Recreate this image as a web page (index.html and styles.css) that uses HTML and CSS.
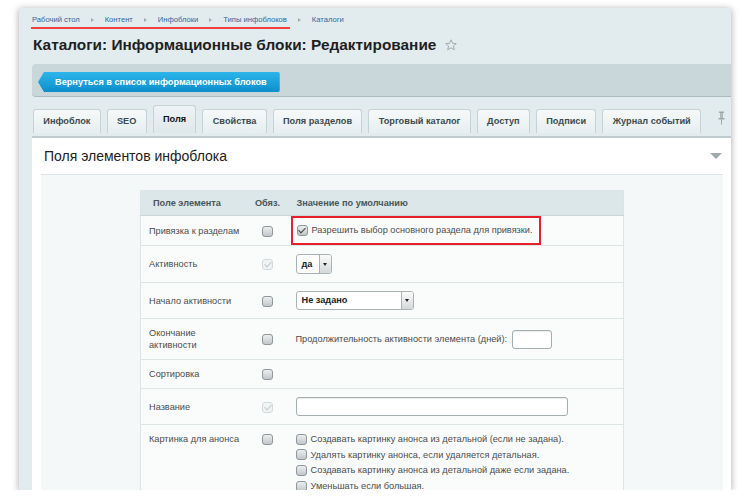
FILE: index.html
```html
<!DOCTYPE html>
<html lang="ru">
<head>
    <meta charset="UTF-8">
    <title>Каталоги: Информационные блоки: Редактирование</title>
    <link rel="stylesheet" href="styles.css">
</head>
<body>

<div class="panel">
    <!--хлебные крошки-->
    <div class="crumbs">
        <span class="crumbs-mark">
            <a href="#">Рабочий стол</a><i class="sep"></i>
            <a href="#">Контент</a><i class="sep"></i>
            <a href="#">Инфоблоки</a><i class="sep"></i>
            <a href="#">Типы инфоблоков</a>
        </span>
        <i class="sep sep-out"></i>
        <a href="#">Каталоги</a>
    </div>

    <!--заголовок-->
    <h1 class="title">
        Каталоги: Информационные блоки: Редактирование
        <svg class="star" width="12" height="12" viewBox="0 0 12 12">
            <polygon points="6,0.8 7.5,4.3 11.3,4.6 8.4,7.1 9.3,10.8 6,8.8 2.7,10.8 3.6,7.1 0.7,4.6 4.5,4.3" fill="none" stroke="#a3acaf" stroke-width="1"/>
        </svg>
    </h1>

    <!--панель с кнопкой-->
    <div class="toolbar">
        <a href="#" class="btn-back">Вернуться в список информационных блоков</a>
    </div>

    <!--вкладки-->
    <ul class="tabs">
        <li class="tab">Инфоблок</li>
        <li class="tab">SEO</li>
        <li class="tab current">Поля</li>
        <li class="tab">Свойства</li>
        <li class="tab">Поля разделов</li>
        <li class="tab">Торговый каталог</li>
        <li class="tab">Доступ</li>
        <li class="tab">Подписи</li>
        <li class="tab">Журнал событий</li>
        <li class="pin">
            <svg width="7" height="14" viewBox="0 0 7 14">
                <rect x="1" y="0.5" width="5" height="1.5" fill="#9ea7aa"/>
                <rect x="2" y="2" width="3" height="5" fill="#b1b9bc"/>
                <rect x="0.5" y="7" width="6" height="1.5" fill="#9ea7aa"/>
                <rect x="3" y="8.5" width="1" height="5" fill="#9ea7aa"/>
            </svg>
        </li>
    </ul>

    <!--содержимое вкладки-->
    <div class="content">
        <div class="content-head">
            <h2>Поля элементов инфоблока</h2>
            <svg width="12" height="7" viewBox="0 0 12 7">
                <polygon points="0,0 12,0 6,6" fill="#9fa8ab"/>
            </svg>
        </div>

        <div class="fields-box">
            <table class="fields">
                <colgroup>
                    <col class="w-name">
                    <col class="w-req">
                    <col>
                </colgroup>
                <thead>
                    <tr>
                        <th class="th-name">Поле элемента</th>
                        <th class="th-req">Обяз.</th>
                        <th class="th-val">Значение по умолчанию</th>
                    </tr>
                </thead>
                <tbody>
                    <tr>
                        <td class="name">Привязка к разделам</td>
                        <td class="req"><span class="chk"></span></td>
                        <td class="val val-mark">
                            <span class="mark">
                                <span class="chk checked"></span>
                                Разрешить выбор основного раздела для привязки.
                            </span>
                        </td>
                    </tr>
                    <tr>
                        <td class="name">Активность</td>
                        <td class="req"><span class="chk checked disabled"></span></td>
                        <td class="val">
                            <span class="select select-yn"><span>да</span><i class="select-arrow"></i></span>
                        </td>
                    </tr>
                    <tr>
                        <td class="name">Начало активности</td>
                        <td class="req"><span class="chk"></span></td>
                        <td class="val">
                            <span class="select select-wide"><span>Не задано</span><i class="select-arrow"></i></span>
                        </td>
                    </tr>
                    <tr>
                        <td class="name">Окончание активности</td>
                        <td class="req"><span class="chk"></span></td>
                        <td class="val">
                            Продолжительность активности элемента (дней):
                            <span class="input input-days"></span>
                        </td>
                    </tr>
                    <tr>
                        <td class="name">Сортировка</td>
                        <td class="req"><span class="chk"></span></td>
                        <td class="val"></td>
                    </tr>
                    <tr>
                        <td class="name">Название</td>
                        <td class="req"><span class="chk checked disabled"></span></td>
                        <td class="val"><span class="input input-name"></span></td>
                    </tr>
                    <tr class="row-top">
                        <td class="name">Картинка для анонса</td>
                        <td class="req"><span class="chk"></span></td>
                        <td class="val">
                            <ul class="check-list">
                                <li><span class="chk"></span>Создавать картинку анонса из детальной (если не задана).</li>
                                <li><span class="chk"></span>Удалять картинку анонса, если удаляется детальная.</li>
                                <li><span class="chk"></span>Создавать картинку анонса из детальной даже если задана.</li>
                                <li><span class="chk"></span>Уменьшать если большая.</li>
                            </ul>
                        </td>
                    </tr>
                </tbody>
            </table>
        </div>
    </div>
</div>

</body>
</html>
```

FILE: styles.css
```css
* {
    margin: 0;
    padding: 0;
    list-style: none;
    box-sizing: border-box;
}

body {
    padding: 8px 19px 0;
    background-color: #fff;
    font-family: "Liberation Sans", Arial, sans-serif;
    color: #333;
}

.panel {
    height: 482px;
    overflow: hidden;
    background-color: #e2ecee;
    box-shadow: 0 1px 7px rgba(0, 0, 0, .35);
}

/*хлебные крошки*/
.crumbs {
    display: flex;
    align-items: flex-start;
    padding: 7px 0 0 13px;
    font-size: 7.6px;
    line-height: 10px;
    white-space: nowrap;
}

.crumbs a {
    color: #2f67a0;
    text-decoration: none;
}

.crumbs-mark {
    display: flex;
    align-items: center;
    margin-left: -1px;
    padding: 0 3px 2px 1px;
    border-bottom: 2px solid #f2403f;
}

.sep {
    width: 0;
    height: 0;
    margin: 0 11px;
    border-left: 3px solid #a4aeb1;
    border-top: 2.5px solid transparent;
    border-bottom: 2.5px solid transparent;
}

.sep-out {
    margin-top: 2.5px;
    margin-left: 8px;
}

/*заголовок*/
.title {
    display: flex;
    align-items: center;
    margin: 6px 0 0 14px;
    font-size: 15.4px;
    line-height: 20px;
    font-weight: bold;
    color: #1f1f1f;
}

.star {
    margin-left: 9px;
}

/*панель с кнопкой*/
.toolbar {
    height: 33px;
    margin: 9px 0 0 13px;
    padding: 7px 0 0 6px;
    background: repeating-conic-gradient(#c6d3d7 0 25%, #ccd9dd 0 50%) 0 0 / 2px 2px;
    border-bottom: 1px solid #abbabe;
    border-radius: 4px 0 0 4px;
}

.btn-back {
    display: inline-block;
    height: 20px;
    line-height: 20px;
    padding: 0 13px 0 17px;
    font-size: 9.2px;
    font-weight: bold;
    color: #fff;
    text-decoration: none;
    background: linear-gradient(#2db5ea, #0c8fcc);
    border-radius: 0 2px 2px 0;
    clip-path: polygon(6px 0, 100% 0, 100% 100%, 6px 100%, 0 50%);
}

/*вкладки*/
.tabs {
    display: flex;
    align-items: flex-end;
    height: 28px;
    margin: 8px 0 0 14px;
}

.tab {
    flex-shrink: 0;
    height: 24px;
    line-height: 23px;
    margin-right: 6px;
    padding: 0 9.3px;
    font-size: 9.2px;
    font-weight: bold;
    white-space: nowrap;
    color: #3d4a4e;
    background: linear-gradient(#f6f9f9, #e7eef0);
    border: 1px solid #c6d2d5;
    border-bottom: 0;
    border-radius: 3px 3px 0 0;
}

.tab.current {
    height: 28px;
    line-height: 27px;
    color: #111;
    background: linear-gradient(#eef3f4, #dfe8ea);
}

.pin {
    align-self: center;
    margin: 2px 6px 0 auto;
}

/*содержимое*/
.content {
    margin: 3px 0 0 13px;
    background-color: #fff;
    border-top: 2px solid #c0ccd0;
}

.content-head {
    display: flex;
    justify-content: space-between;
    align-items: center;
    padding: 8px 9px 8px 12px;
}

.content-head h2 {
    font-size: 14px;
    line-height: 20px;
    font-weight: normal;
    color: #222;
}

.fields-box {
    min-height: 330px;
    margin: 0 8px 0 9px;
    padding: 15px 0 0 99px;
    background-color: #f4f8f9;
    border-top: 1px solid #dbe4e6;
}

/*таблица полей*/
.fields {
    width: 484px;
    table-layout: fixed;
    border-collapse: collapse;
    background-color: #fafcfc;
    border-left: 1px solid #dce4e6;
    border-right: 1px solid #dce4e6;
    font-size: 9.2px;
    line-height: 12px;
    color: #4b4b4b;
}

.w-name {
    width: 106px;
}

.w-req {
    width: 42px;
}

.fields th {
    padding: 7px 0 6px;
    text-align: left;
    font-weight: bold;
    color: #4a5659;
    background-color: #dce7ea;
    border-bottom: 1px solid #cbd6d9;
}

.fields .th-name {
    padding-left: 12px;
}

.fields .th-req {
    text-align: center;
}

.fields .th-val {
    padding-left: 8px;
}

.fields td {
    padding: 8px 0;
    vertical-align: middle;
    border-bottom: 1px solid #dde5e7;
}

.fields td.name {
    padding-left: 8px;
    padding-right: 6px;
}

.fields td.req {
    text-align: center;
}

.fields td.val {
    padding-left: 7px;
}

.fields td.val-mark {
    padding: 0 0 0 2px;
}

.row-top td {
    vertical-align: top;
}

.mark {
    display: inline-flex;
    align-items: center;
    gap: 4px;
    padding: 6px 6px 6px 4px;
    line-height: 13px;
    border: 2px solid #e8202a;
}

/*чекбоксы*/
.chk {
    display: inline-flex;
    justify-content: center;
    align-items: center;
    width: 11px;
    height: 11px;
    vertical-align: middle;
    background: linear-gradient(#eceeef, #c2c7c9);
    border: 1px solid #8f979a;
    border-radius: 3px;
}

.chk.checked::after {
    content: "";
    width: 3px;
    height: 6px;
    margin-top: -2px;
    border-right: 1.5px solid #444;
    border-bottom: 1.5px solid #444;
    transform: rotate(45deg);
}

.chk.disabled {
    background: #f1f4f5;
    border-color: #d3dadc;
}

.chk.disabled::after {
    border-color: #c3cbce;
}

/*поля ввода*/
.select {
    display: inline-flex;
    height: 20px;
    vertical-align: middle;
    font-weight: bold;
    color: #222;
    background-color: #fff;
    border: 1px solid #a9b3b6;
    border-radius: 3px;
    overflow: hidden;
}

.select span {
    flex: 1;
    padding-left: 5px;
    line-height: 18px;
}

.select-arrow {
    display: flex;
    justify-content: center;
    align-items: center;
    width: 12px;
    background: linear-gradient(#fbfbfb, #d4d8d9);
    border-left: 1px solid #a9b3b6;
}

.select-arrow::after {
    content: "";
    border-left: 2.5px solid transparent;
    border-right: 2.5px solid transparent;
    border-top: 3px solid #222;
}

.select-yn {
    width: 36px;
}

.select-wide {
    width: 118px;
    height: 19px;
}

.select-wide span {
    line-height: 17px;
}

.input {
    display: inline-block;
    vertical-align: middle;
    background-color: #fff;
    border: 1px solid #a3aeb1;
    border-radius: 3px;
    box-shadow: inset 0 1px 1px rgba(0, 0, 0, .08);
}

.input-days {
    width: 40px;
    height: 19px;
    margin-left: 2px;
}

.input-name {
    width: 272px;
    height: 19px;
}

.check-list li {
    display: flex;
    align-items: center;
    gap: 4px;
    height: 12px;
    margin-bottom: 3.7px;
}
```
